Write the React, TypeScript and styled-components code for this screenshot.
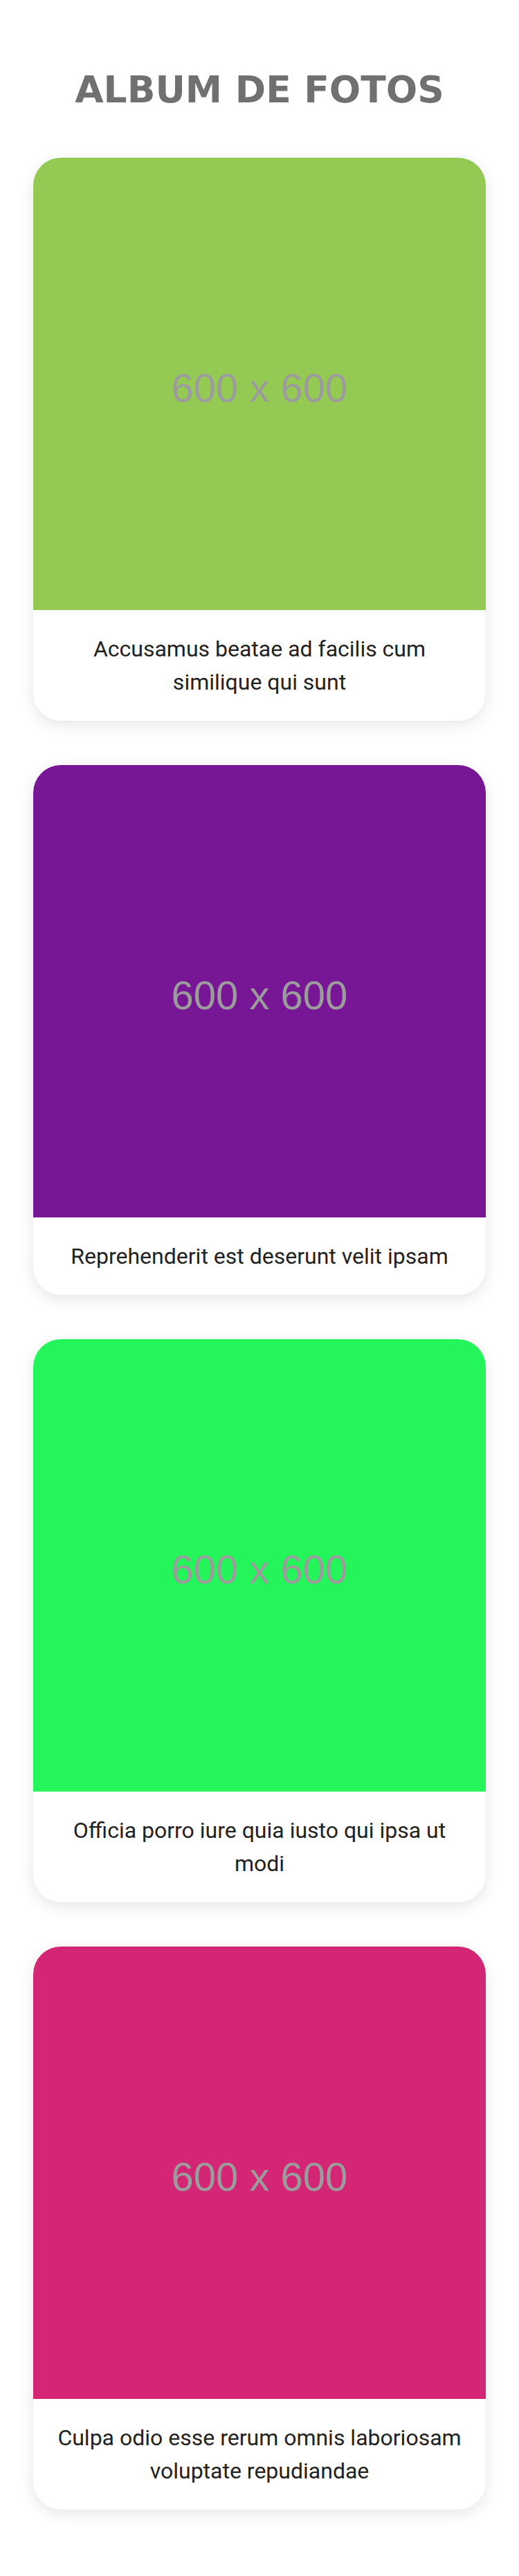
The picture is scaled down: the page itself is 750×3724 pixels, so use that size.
import React from "react";
import styled, { createGlobalStyle } from "styled-components";

const Global = createGlobalStyle`
  html, body { margin: 0; padding: 0; background: #ffffff; }
  body { font-family: Roboto, "Liberation Sans", sans-serif; }
  * { box-sizing: border-box; }
`;

const Page = styled.main`
  display: flex;
  flex-direction: column;
  align-items: center;
  padding: 98px 48px 95px;
`;

const Title = styled.h1`
  margin: 0 0 66px;
  font-family: "DejaVu Sans", "Liberation Sans", sans-serif;
  font-weight: 700;
  font-size: 53.5px;
  line-height: 64px;
  color: #707070;
  text-align: center;
  text-transform: uppercase;
`;

const List = styled.section`
  display: flex;
  flex-direction: column;
  gap: 64px;
  width: 100%;
`;

const Card = styled.article`
  display: flex;
  flex-direction: column;
  border-radius: 40px;
  overflow: hidden;
  background: #ffffff;
  box-shadow: 0 6px 22px rgba(0, 0, 0, 0.1);
`;

const Photo = styled.div<{ $bg: string }>`
  display: flex;
  align-items: center;
  justify-content: center;
  aspect-ratio: 1 / 1;
  width: 100%;
  padding-top: 10px;
  background: ${(p) => p.$bg};
  font-family: "Liberation Sans", Arial, sans-serif;
  font-size: 58px;
  color: #9c9c9c;
`;

const Caption = styled.p`
  margin: 0;
  padding: 32px;
  font-family: Roboto, "Liberation Sans", sans-serif;
  font-size: 32px;
  line-height: 48px;
  color: #222222;
  text-align: center;
`;

const photos = [
  { color: "#94c954", title: "Accusamus beatae ad facilis cum similique qui sunt" },
  { color: "#771796", title: "Reprehenderit est deserunt velit ipsam" },
  { color: "#24f55a", title: "Officia porro iure quia iusto qui ipsa ut modi" },
  { color: "#d32776", title: "Culpa odio esse rerum omnis laboriosam voluptate repudiandae" },
];

export default function App() {
  return (
    <>
      <Global />
      <Page>
        <Title>Album de fotos</Title>
        <List>
          {photos.map((p) => (
            <Card key={p.title}>
              <Photo $bg={p.color}>600 x 600</Photo>
              <Caption>{p.title}</Caption>
            </Card>
          ))}
        </List>
      </Page>
    </>
  );
}
